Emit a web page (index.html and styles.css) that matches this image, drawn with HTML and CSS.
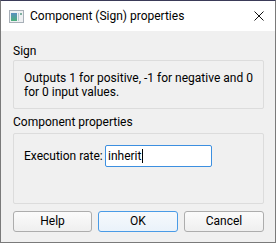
FILE: index.html
```html
<!DOCTYPE html>
<html>
<head>
<meta charset="utf-8">
<link rel="stylesheet" href="styles.css">
</head>
<body>
<div class="window">
  <div class="titlebar">
    <svg class="app-icon" width="15" height="13" viewBox="0 0 15 13">
      <defs>
        <linearGradient id="g" x1="0" y1="0" x2="0" y2="1">
          <stop offset="0" stop-color="#5a8fc0"/>
          <stop offset="1" stop-color="#4caf7a"/>
        </linearGradient>
      </defs>
      <rect x="0.5" y="0.5" width="14" height="12" fill="#eef0f2" stroke="#a8b0b8"/>
      <rect x="2" y="3" width="6" height="8" fill="url(#g)"/>
      <rect x="9" y="3" width="1" height="8" fill="#b8c8d0"/>
      <rect x="11" y="3" width="2" height="2" fill="#7fb0a0"/>
    </svg>
    <span class="title">Component (Sign) properties</span>
    <svg class="close" width="10" height="10" viewBox="0 0 10 10">
      <path d="M0.5 0.5 L9.5 9.5 M9.5 0.5 L0.5 9.5" stroke="#111" stroke-width="1"/>
    </svg>
  </div>
  <div class="content">
    <div class="group-label first">Sign</div>
    <div class="group desc">Outputs 1 for positive, -1 for negative and 0<br>for 0 input values.</div>
    <div class="group-label second">Component properties</div>
    <div class="group props">
      <label class="field-label">Execution rate:</label>
      <div class="input">inherit<span class="caret"></span></div>
    </div>
    <div class="buttons">
      <div class="btn">Help</div>
      <div class="btn default">OK</div>
      <div class="btn">Cancel</div>
    </div>
  </div>
</div>
</body>
</html>
```
FILE: styles.css
```css
html, body {
  margin: 0;
  padding: 0;
}
body {
  font-family: Roboto, "Liberation Sans", Arial, sans-serif;
  font-size: 12px;
  color: #000;
  background: #fff;
}
.window {
  width: 276px;
  height: 243px;
  box-sizing: border-box;
  border: 1px solid #7a7a7a;
  border-top-color: #3a3a58;
  background: #f0f0f0;
  display: flex;
  flex-direction: column;
}
.titlebar {
  height: 30px;
  background: #fff;
  display: flex;
  align-items: center;
  padding-left: 8px;
  padding-right: 11px;
}
.app-icon {
  display: block;
}
.title {
  margin-left: 6px;
  font-size: 12px;
  flex: 1;
  white-space: nowrap;
}
.close {
  display: block;
}
.content {
  padding: 0 11px 0 12px;
  display: flex;
  flex-direction: column;
  white-space: nowrap;
}
.group-label {
  line-height: 14px;
  height: 14px;
}
.group-label.first {
  margin-top: 13px;
  margin-bottom: 2px;
}
.group-label.second {
  margin-top: 6px;
  margin-bottom: 4px;
}
.group {
  border: 1px solid #dcdcdc;
  border-radius: 2px;
  background: #f0f0f0;
  box-sizing: border-box;
}
.desc {
  height: 49px;
  padding: 10px 10px 0 10px;
  line-height: 14px;
}
.props {
  height: 71px;
  padding: 11px 10px 0 10px;
  display: flex;
  align-items: flex-start;
}
.field-label {
  line-height: 22px;
  width: 81px;
  flex: none;
}
.input {
  width: 107px;
  height: 22px;
  box-sizing: border-box;
  border: 1px solid #3c8fe0;
  border-radius: 2px;
  background: #fff;
  line-height: 20px;
  padding-left: 2px;
  display: flex;
  align-items: center;
}
.caret {
  display: inline-block;
  width: 1px;
  height: 14px;
  background: #000;
  margin-left: 1px;
}
.buttons {
  margin-top: 7px;
  display: grid;
  grid-template-columns: 79px 80px 80px;
  column-gap: 6px;
}
.btn {
  height: 21px;
  box-sizing: border-box;
  border: 1px solid #adadad;
  border-radius: 3px;
  background: linear-gradient(#fbfbfb, #efefef);
  text-align: center;
  line-height: 19px;
}
.btn.default {
  border-color: #4a9be6;
  background: linear-gradient(#f6f9fc, #eaf2fa);
}
```
